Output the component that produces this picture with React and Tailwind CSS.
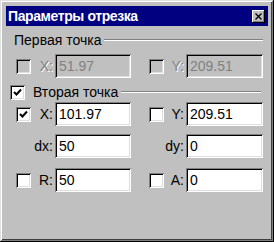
import React from "react";

const sunken =
  "shadow-[inset_1px_1px_#808080,inset_-1px_-1px_#fff,inset_2px_2px_#000,inset_-2px_-2px_#dfdfdf]";

const CheckBox = ({ checked = false, disabled = false }) => (
  <div
    className={`w-[15px] h-[15px] shrink-0 flex items-center justify-center ${sunken} ${
      disabled ? "bg-[#c0c0c0]" : "bg-white"
    }`}
  >
    {checked && (
      <svg width="9" height="9" viewBox="0 0 9 9">
        <path d="M1 4 L3.5 6.5 L8 1.5" stroke="#000" strokeWidth="2" fill="none" />
      </svg>
    )}
  </div>
);

const Field = ({ value, disabled = false, width = "w-[76px]" }) => (
  <div
    className={`${width} h-[24px] shrink-0 flex items-center pl-[4px] ${sunken} ${
      disabled ? "bg-[#c0c0c0] text-[#808080]" : "bg-white text-black"
    }`}
  >
    {value}
  </div>
);

// one half of a row: checkbox (or gap), label, field
const Cell = ({ box = true, checked, disabled, label, value, width }) => (
  <div className="flex items-center">
    {box ? <CheckBox checked={checked} disabled={disabled} /> : <div className="w-[15px]" />}
    <span
      className={`flex-1 text-right pr-[2px] ${
        disabled ? "text-[#808080] [text-shadow:1px_1px_#fff]" : "text-black"
      }`}
    >
      {label}
    </span>
    <Field value={value} disabled={disabled} width={width} />
  </div>
);

const Row = ({ left, right, className = "" }) => (
  <div className={`grid grid-cols-[115px_114px] gap-x-[18px] pl-[16px] ${className}`}>
    <Cell {...left} width="w-[76px]" />
    <Cell {...right} width="w-[77px]" />
  </div>
);

const GroupLine = () => (
  <div className="flex-1 h-[2px] border-t border-t-[#808080] border-b border-b-white" />
);

export default function App() {
  return (
    <div
      className="w-[274px] h-[242px] bg-[#c0c0c0] pt-[6px] px-[6px] text-[14px] leading-[16px] shadow-[inset_-1px_-1px_#000,inset_1px_1px_#dfdfdf,inset_-2px_-2px_#808080,inset_2px_2px_#fff,inset_-3px_-3px_#404040]"
      style={{ fontFamily: '"Liberation Sans", Arial, sans-serif' }}
    >
      {/* title bar */}
      <div className="h-[20px] bg-[#000080] flex items-center justify-between pl-[2px] pr-[3px]">
        <span className="text-white font-bold text-[14px] tracking-[-0.4px]">Параметры отрезка</span>
        <div className="w-[13px] h-[13px] bg-[#c0c0c0] flex items-center justify-center shadow-[inset_-1px_-1px_#000,inset_1px_1px_#fff,inset_-2px_-2px_#808080]">
          <svg width="7" height="7" viewBox="0 0 7 7">
            <path d="M0.5 0.5 L6.5 6.5 M6.5 0.5 L0.5 6.5" stroke="#000" strokeWidth="1.3" />
          </svg>
        </div>
      </div>

      {/* first point */}
      <div className="flex items-center mt-[6px] pl-[8px] pr-[5px]">
        <span>Первая точка</span>
        <div className="flex-1 ml-[3px]">
          <GroupLine />
        </div>
      </div>
      <Row
        className="mt-[6px] -ml-[6px]"
        left={{ disabled: true, label: "X:", value: "51.97" }}
        right={{ disabled: true, label: "Y:", value: "209.51" }}
      />

      {/* second point */}
      <div className="flex items-center mt-[6px] pl-[4px] pr-[7px]">
        <CheckBox checked />
        <span className="ml-[8px]">Вторая точка</span>
        <div className="flex-1 ml-[3px]">
          <GroupLine />
        </div>
      </div>
      <Row
        className="mt-[2px] -ml-[6px]"
        left={{ checked: true, label: "X:", value: "101.97" }}
        right={{ label: "Y:", value: "209.51" }}
      />
      <Row
        className="mt-[8px] -ml-[6px]"
        left={{ box: false, label: "dx:", value: "50" }}
        right={{ box: false, label: "dy:", value: "0" }}
      />
      <Row
        className="mt-[10px] -ml-[6px]"
        left={{ label: "R:", value: "50" }}
        right={{ label: "A:", value: "0" }}
      />
    </div>
  );
}
